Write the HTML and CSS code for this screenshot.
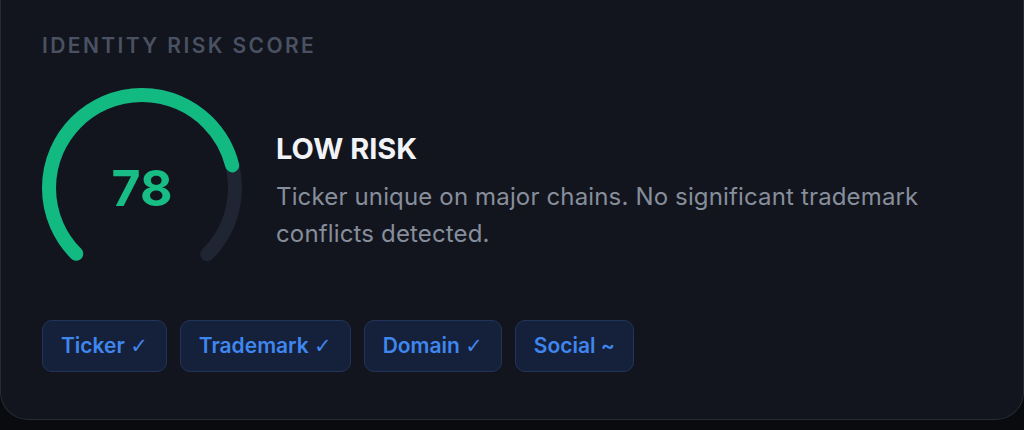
FILE: index.html
```html
<!DOCTYPE html>
<html lang="en">
<head>
  <meta charset="UTF-8">
  <title>Identity Risk Score</title>
  <link rel="stylesheet" href="styles.css">
</head>
<body>
  <div class="card">
    <h3 class="card-title">IDENTITY RISK SCORE</h3>
    <div class="score-row">
      <div class="gauge">
        <svg width="204" height="204" viewBox="0 0 204 204">
          <!-- track: 270deg arc, r=93, circumference 584.34 -->
          <circle class="gauge-track" cx="102" cy="102" r="93"
                  stroke-dasharray="438.25 584.34" transform="rotate(135 102 102)"></circle>
          <circle class="gauge-value" cx="102" cy="102" r="93"
                  stroke-dasharray="341.84 584.34" transform="rotate(135 102 102)"></circle>
        </svg>
        <span class="gauge-number">78</span>
      </div>
      <div class="score-text">
        <div class="risk-level">LOW RISK</div>
        <p class="risk-desc">Ticker unique on major chains. No significant trademark conflicts detected.</p>
      </div>
    </div>
    <div class="chips">
      <span class="chip">Ticker <span class="mark">✓</span></span>
      <span class="chip">Trademark <span class="mark">✓</span></span>
      <span class="chip">Domain <span class="mark">✓</span></span>
      <span class="chip">Social ~</span>
    </div>
  </div>
</body>
</html>
```
FILE: styles.css
```css
body {
  margin: 0;
  background: #0a0b0f;
  font-family: Inter, "Noto Sans", sans-serif;
}
.card {
  background: #12151d;
  border: 1px solid #262b38;
  border-top: none;
  border-radius: 0 0 28px 28px;
  padding: 34px 41px 47px;
}
.card-title {
  margin: 0;
  font-size: 21px;
  line-height: 24px;
  font-weight: 600;
  letter-spacing: 2.4px;
  color: #4a5162;
}
.score-row {
  display: flex;
  align-items: center;
  gap: 32px;
  margin-top: 28px;
}
.gauge {
  position: relative;
  width: 204px;
  height: 204px;
  margin-left: -2px;
  flex-shrink: 0;
}
.gauge svg circle {
  fill: none;
  stroke-width: 14;
  stroke-linecap: round;
}
.gauge-track {
  stroke: #1f2533;
}
.gauge-value {
  stroke: #12b981;
}
.gauge-number {
  position: absolute;
  top: 0;
  left: 0;
  right: 0;
  bottom: 0;
  display: flex;
  align-items: center;
  justify-content: center;
  font-size: 50px;
  font-weight: 700;
  color: #17bd84;
}
.score-text {
  max-width: 680px;
  margin-top: 7px;
}
.risk-level {
  font-size: 29px;
  line-height: 35px;
  font-weight: 700;
  color: #f1f3f6;
}
.risk-desc {
  margin: 12px 0 0;
  font-size: 24px;
  line-height: 37px;
  letter-spacing: 0.15px;
  color: #878e9b;
}
.chips {
  display: flex;
  gap: 13px;
  margin-top: 30px;
}
.chip {
  padding: 13px 18px;
  font-size: 21px;
  font-weight: 600;
  line-height: 24px;
  color: #3f86ee;
  background: #15203a;
  border: 1px solid #23345a;
  border-radius: 10px;
}
.mark {
  font-family: "DejaVu Sans", sans-serif;
  font-weight: 400;
}
```
